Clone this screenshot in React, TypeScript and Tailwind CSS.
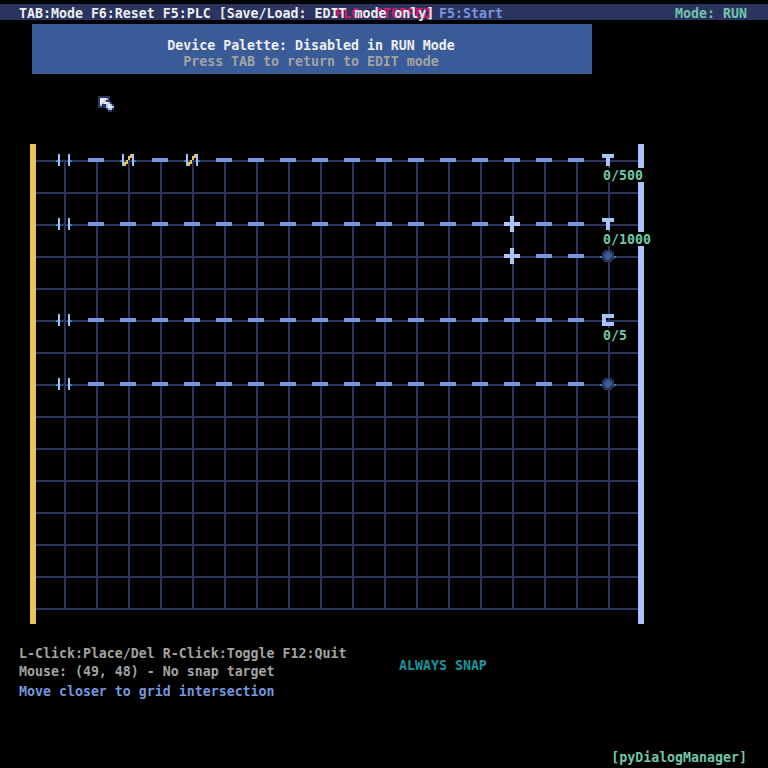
import React from "react";

const NAVY = "#2b335f";
const SKY = "#a9c1ff";
const BLUE = "#7696de";
const TEAL = "#19959c";
const YELLOW = "#e9c35b";
const STEEL = "#395c98";

const COLS = Array.from({ length: 18 }, (_, i) => i);
const ROWS = Array.from({ length: 15 }, (_, i) => i);

const R = ({ x, y, w, h, c }: { x: number; y: number; w: number; h: number; c: string }) => (
  <rect x={x} y={y} width={w} height={h} fill={c} />
);

const At = ({ col, row, children }: { col: number; row: number; children: React.ReactNode }) => (
  <g transform={`translate(${28 + col * 32} ${16 + row * 32})`}>{children}</g>
);

const Wire = () => <R x={-8} y={-2} w={16} h={4} c={BLUE} />;

const Contact = ({ closed = false }: { closed?: boolean }) => (
  <>
    <R x={-8} y={0} w={2} h={2} c={TEAL} />
    <R x={6} y={0} w={2} h={2} c={TEAL} />
    <R x={-6} y={-6} w={2} h={12} c={SKY} />
    <R x={4} y={-6} w={2} h={12} c={SKY} />
    {closed && (
      <>
        <R x={-4} y={2} w={2} h={4} c={YELLOW} />
        <R x={-2} y={0} w={2} h={4} c={YELLOW} />
        <R x={0} y={-4} w={2} h={4} c={YELLOW} />
        <R x={2} y={-6} w={2} h={4} c={YELLOW} />
      </>
    )}
  </>
);

const Branch = () => (
  <>
    <R x={-8} y={-2} w={16} h={4} c={SKY} />
    <R x={-2} y={-8} w={4} h={16} c={SKY} />
  </>
);

const Timer = () => (
  <>
    <R x={-6} y={-6} w={12} h={4} c={SKY} />
    <R x={-2} y={-2} w={4} h={8} c={SKY} />
  </>
);

const Counter = () => (
  <>
    <R x={-6} y={-6} w={4} h={12} c={SKY} />
    <R x={-2} y={-6} w={8} h={4} c={SKY} />
    <R x={-2} y={2} w={8} h={4} c={SKY} />
  </>
);

const Coil = () => (
  <>
    <R x={-8} y={0} w={2} h={2} c={TEAL} />
    <R x={6} y={0} w={2} h={2} c={TEAL} />
    <R x={-4} y={-6} w={8} h={12} c={NAVY} />
    <R x={-6} y={-4} w={12} h={8} c={NAVY} />
    <R x={-2} y={-4} w={4} h={8} c={STEEL} />
    <R x={-4} y={-2} w={8} h={4} c={STEEL} />
  </>
);

const wires: [number, number[]][] = [
  [0, [1, 3, 5, 6, 7, 8, 9, 10, 11, 12, 13, 14, 15, 16]],
  [2, [1, 2, 3, 4, 5, 6, 7, 8, 9, 10, 11, 12, 13, 15, 16]],
  [3, [15, 16]],
  [5, COLS.slice(1, 17)],
  [7, COLS.slice(1, 17)],
];

const Ladder = () => (
  <svg width="602" height="480" viewBox="0 0 602 480" shapeRendering="crispEdges" className="block">
    {ROWS.map((r) => (
      <R key={r} x={0} y={16 + r * 32} w={602} h={2} c={NAVY} />
    ))}
    {COLS.map((c) => (
      <R key={c} x={28 + c * 32} y={16} w={2} h={450} c={NAVY} />
    ))}
    {wires.map(([row, cols]) =>
      cols.map((col) => (
        <At key={`${row}-${col}`} col={col} row={row}>
          <Wire />
        </At>
      )),
    )}
    {[0, 2, 5, 7].map((row) => (
      <At key={row} col={0} row={row}>
        <Contact />
      </At>
    ))}
    <At col={2} row={0}><Contact closed /></At>
    <At col={4} row={0}><Contact closed /></At>
    <At col={14} row={2}><Branch /></At>
    <At col={14} row={3}><Branch /></At>
    <At col={17} row={0}><Timer /></At>
    <At col={17} row={2}><Timer /></At>
    <At col={17} row={5}><Counter /></At>
    <At col={17} row={3}><Coil /></At>
    <At col={17} row={7}><Coil /></At>
  </svg>
);

const POINTER = [
  "11111100",
  "17776100",
  "17761100",
  "17677610",
  "16116761",
  "11116776",
  "00001661",
  "00000110",
];
const INK: Record<string, string> = { "1": NAVY, "7": "#eeeeee", "6": SKY, c: BLUE };

const Pointer = () => (
  <svg width="16" height="16" viewBox="0 0 16 16" shapeRendering="crispEdges" className="absolute left-[98px] top-[96px]">
    {POINTER.flatMap((line, y) =>
      [...line].map((p, x) => (p === "0" ? null : <R key={`${x}-${y}`} x={x * 2} y={y * 2} w={2} h={2} c={INK[p]} />)),
    )}
  </svg>
);

export default function App() {
  return (
    <div className="relative flex h-[768px] w-[768px] flex-col overflow-hidden whitespace-pre bg-black pt-1 font-['DejaVu_Sans_Mono','Liberation_Mono',monospace] text-[13.288px] font-bold leading-3 text-[#a3a3a3]">
      <header className="relative flex h-4 shrink-0 items-start bg-[#2b335f] pl-[19px] pt-1">
        <span className="absolute left-[335px] top-1 text-[#d4186c]">PLC: STOPPED</span>
        <span className="relative w-[420px] text-[#eeeeee]">TAB:Mode F6:Reset F5:PLC [Save/Load: EDIT mode only]</span>
        <span className="text-[#7696de]">F5:Start</span>
        <span className="ml-auto mr-[21px] text-[#70c6a9]">Mode: RUN</span>
      </header>

      <section className="ml-8 mt-1 flex h-[50px] w-[560px] shrink-0 flex-col items-center gap-1 bg-[#395c98] pr-0.5 pt-4">
        <p className="text-[#eeeeee]">Device Palette: Disabled in RUN Mode</p>
        <p>Press TAB to return to EDIT mode</p>
      </section>

      <main className="relative ml-[30px] mt-[70px] flex h-[480px] w-[614px] shrink-0">
        <div className="w-1.5 bg-[#e9c35b]" />
        <Ladder />
        <div className="w-1.5 bg-[#a9c1ff]" />
        <span className="absolute left-[572px] top-6 bg-black pl-px pr-[3px] pt-0.5 text-[#70c6a9]">0/500</span>
        <span className="absolute left-[572px] top-[88px] bg-black pl-px pr-[3px] pt-0.5 text-[#70c6a9]">0/1000</span>
        <span className="absolute left-[572px] top-[184px] bg-black pl-px pr-[3px] pt-0.5 text-[#70c6a9]">0/5</span>
      </main>

      <footer className="mt-6 flex grow flex-col">
        <div className="flex pl-[19px]">
          <div className="flex w-[380px] flex-col">
            <p>L-Click:Place/Del R-Click:Toggle F12:Quit</p>
            <p className="mt-1.5">Mouse: (49, 48) - No snap target</p>
            <p className="mt-2 text-[#7696de]">Move closer to grid intersection</p>
          </div>
          <p className="mt-3 text-[#19959c]">ALWAYS SNAP</p>
        </div>
        <p className="mb-1 mr-[21px] mt-auto self-end text-[#70c6a9]">[pyDialogManager]</p>
      </footer>

      <Pointer />
    </div>
  );
}
